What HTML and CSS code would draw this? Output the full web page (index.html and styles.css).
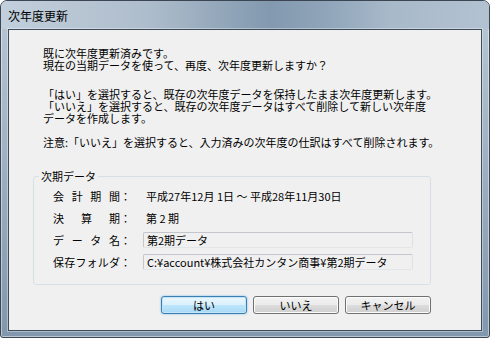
FILE: index.html
```html
<!DOCTYPE html>
<html lang="ja">
<head>
    <meta charset="UTF-8">
    <meta name="viewport" content="width=device-width, initial-scale=1.0">
    <title>次年度更新</title>
    <link rel="stylesheet" href="styles.css">
</head>
<body>
    <div class="window">
        <div class="titlebar">次年度更新</div>
        <div class="client">
            <div class="message">
                <div class="para">
                    <div class="line">既に次年度更新済みです。</div>
                    <div class="line">現在の当期データを使って、再度、次年度更新しますか？</div>
                </div>
                <div class="para choice">
                    <div class="line">「はい」を選択すると、既存の次年度データを保持したまま次年度更新します。</div>
                    <div class="line">「いいえ」を選択すると、既存の次年度データはすべて削除して新しい次年度</div>
                    <div class="line">データを作成します。</div>
                </div>
                <div class="para note">
                    <div class="line">注意:「いいえ」を選択すると、入力済みの次年度の仕訳はすべて削除されます。</div>
                </div>
            </div>

            <fieldset class="group">
                <legend>次期データ</legend>
                <div class="row">
                    <span class="label">会計期間</span><span class="colon">：</span>
                    <span class="value">平成27年12月 1日 ～ 平成28年11月30日</span>
                </div>
                <div class="row">
                    <span class="label">決算期</span><span class="colon">：</span>
                    <span class="value">第 2 期</span>
                </div>
                <div class="row">
                    <span class="label">データ名</span><span class="colon">：</span>
                    <span class="field">第2期データ</span>
                </div>
                <div class="row">
                    <span class="label">保存フォルダ</span><span class="colon">：</span>
                    <span class="field">C:¥account¥株式会社カンタン商事¥第2期データ</span>
                </div>
            </fieldset>

            <div class="buttons">
                <button class="btn btn-default">はい</button>
                <button class="btn">いいえ</button>
                <button class="btn">キャンセル</button>
            </div>
        </div>
    </div>
</body>
</html>
```

FILE: styles.css
```css
* {
    box-sizing: border-box;
}
body {
    margin: 0;
    font-family: "Noto Sans CJK JP", "Noto Sans", sans-serif;
    font-size: 11px;
    color: #000;
}
.window {
    width: 490px;
    height: 338px;
    display: flex;
    flex-direction: column;
    padding: 0 7px 6px;
    border: 1px solid #3b4652;
    border-radius: 7px 7px 3px 3px;
    background: linear-gradient(to bottom, #b9c7d5, #8197ae);
    box-shadow: inset 0 0 0 1px rgba(255, 255, 255, 0.45);
    overflow: hidden;
}
.titlebar {
    height: 28px;
    margin: 0 -7px;
    padding-left: 7px;
    display: flex;
    align-items: center;
    font-size: 12px;
    background: linear-gradient(to right, #c2cfdc 0%, #aebdcc 30%, #8299af 55%, #8fa4b9 66%, #a8b9ca 80%, #b3c2d1 100%);
}
.client {
    flex: 1;
    border: 1px solid #3e4c5a;
    background-color: #f0f0f0;
    box-shadow: 0 0 0 1px rgba(255, 255, 255, 0.35);
}
.message {
    padding: 17px 0 0 34px;
    white-space: nowrap;
}
.message .line {
    height: 12px;
    line-height: 12px;
}
.message .choice {
    margin-top: 17px;
}
.message .note {
    margin-top: 12px;
}
.group {
    width: 398px;
    margin: 23px 0 0 24px;
    padding: 6px 0 14px 5px;
    min-width: 0;
    border: 1px solid #d5dfe5;
    border-radius: 3px;
}
.group legend {
    padding: 0 2px;
    line-height: 11px;
}
.row {
    height: 16px;
    margin: 6px 0 0 14px;
    display: flex;
    align-items: center;
    line-height: 16px;
    white-space: nowrap;
}
.row:first-of-type {
    margin-top: 0;
}
.row .label {
    width: 67px;
    text-align: justify;
    text-align-last: justify;
}
.row .colon {
    width: 11px;
}
.row .value {
    margin-left: 15px;
}
.row .field {
    width: 270px;
    height: 16px;
    margin-left: 12px;
    padding-left: 3px;
    line-height: 14px;
    border: 1px solid #c3c7cb;
    border-right-color: #dfe2e5;
    border-bottom-color: #e3e6e9;
    border-radius: 2px;
    background-color: #f0f0f0;
}
.buttons {
    margin-top: 11px;
    padding-right: 50px;
    display: flex;
    justify-content: flex-end;
    gap: 6px;
}
.btn {
    width: 86px;
    height: 18px;
    padding: 0;
    font-family: inherit;
    font-size: 11px;
    line-height: 16px;
    color: #000;
    border: 1px solid #707070;
    border-radius: 3px;
    background: linear-gradient(to bottom, #f2f2f2 0%, #ebebeb 50%, #dddddd 50%, #cfcfcf 100%);
    box-shadow: inset 0 0 0 1px #fcfcfc;
}
.btn-default {
    border-color: #3c7fb1;
    background: linear-gradient(to bottom, #eaf6fd 0%, #d9f0fc 50%, #bee6fd 50%, #a7d9f5 100%);
    box-shadow: inset 0 0 0 1px #c4e5f6, 0 0 2px #61b4e6;
}
```
